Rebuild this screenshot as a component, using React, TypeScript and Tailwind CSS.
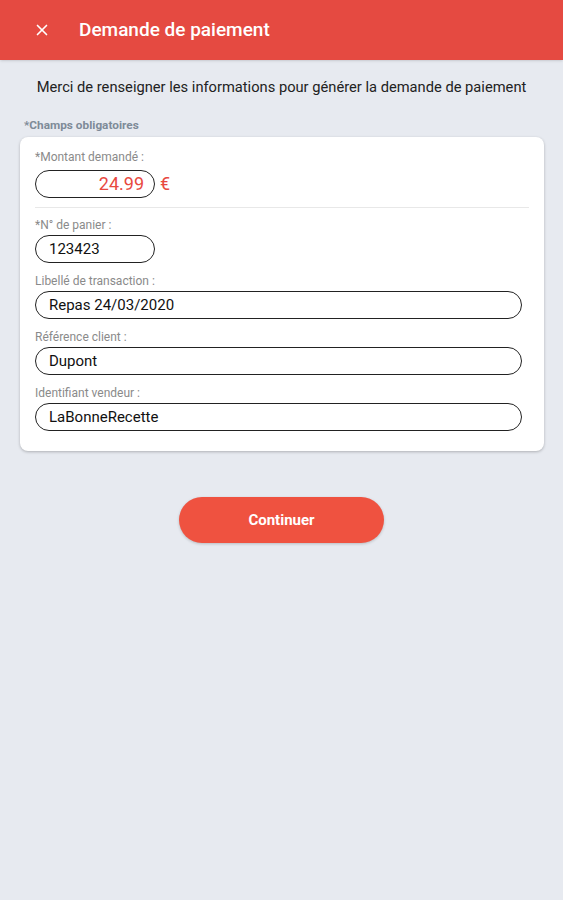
import React from "react";
import { X } from "lucide-react";

const fields = [
  { label: "Libellé de transaction :", value: "Repas 24/03/2020" },
  { label: "Référence client :", value: "Dupont" },
  { label: "Identifiant vendeur :", value: "LaBonneRecette" },
];

export default function App() {
  return (
    <div
      className="min-h-[900px] w-full bg-[#e7eaf0]"
      style={{ fontFamily: "Roboto, 'Liberation Sans', sans-serif" }}
    >
      <header className="flex h-[60px] items-center bg-[#e54a41] shadow-sm">
        <button className="ml-[33px] text-white">
          <X size={18} strokeWidth={2.2} />
        </button>
        <h1 className="ml-[28px] text-[19px] font-medium text-white">
          Demande de paiement
        </h1>
      </header>

      <p className="mt-[16px] text-center text-[14.7px] text-[#222]">
        Merci de renseigner les informations pour générer la demande de paiement
      </p>

      <div className="mt-[22px] px-[20px]">
        <div className="ml-[4px] text-[11.8px] font-bold leading-none text-[#7e8b98]">
          *Champs obligatoires
        </div>
        <div className="mt-[5px] w-[524px] rounded-lg bg-white px-[15px] pb-[20px] pt-[14px] shadow-[0_1px_3px_rgba(0,0,0,0.25)]">
          <div className="text-[12px] leading-[13px] text-[#8a8a8a]">
            *Montant demandé :
          </div>
          <div className="mt-[6px] flex items-center">
            <div className="flex h-[28px] w-[120px] items-center justify-end rounded-full border-[1.5px] border-[#222] pr-[10px] text-[18px] text-[#e8493f]">
              24.99
            </div>
            <span className="ml-[5px] text-[18px] text-[#e8493f]">€</span>
          </div>
          <div className="mt-[9px] h-px w-full bg-[#e8e8e8]" />

          <div className="mt-[11px] text-[12px] leading-[13px] text-[#8a8a8a]">
            *N° de panier :
          </div>
          <div className="mt-[3px] flex h-[28px] w-[120px] items-center rounded-full border-[1.5px] border-[#222] pl-[13px] text-[15px] text-[#111]">
            123423
          </div>

          {fields.map((f) => (
            <div key={f.label}>
              <div className="mt-[12px] text-[12px] leading-[13px] text-[#8a8a8a]">
                {f.label}
              </div>
              <div className="mt-[3px] flex h-[28px] w-[487px] items-center rounded-full border-[1.5px] border-[#222] pl-[13px] text-[15px] text-[#111]">
                {f.value}
              </div>
            </div>
          ))}
        </div>
      </div>

      <div className="mt-[46px] flex justify-center">
        <button className="h-[46px] w-[205px] rounded-full bg-[#ef5240] text-[15px] font-bold text-white shadow-[0_1px_3px_rgba(0,0,0,0.2)]">
          Continuer
        </button>
      </div>
    </div>
  );
}
